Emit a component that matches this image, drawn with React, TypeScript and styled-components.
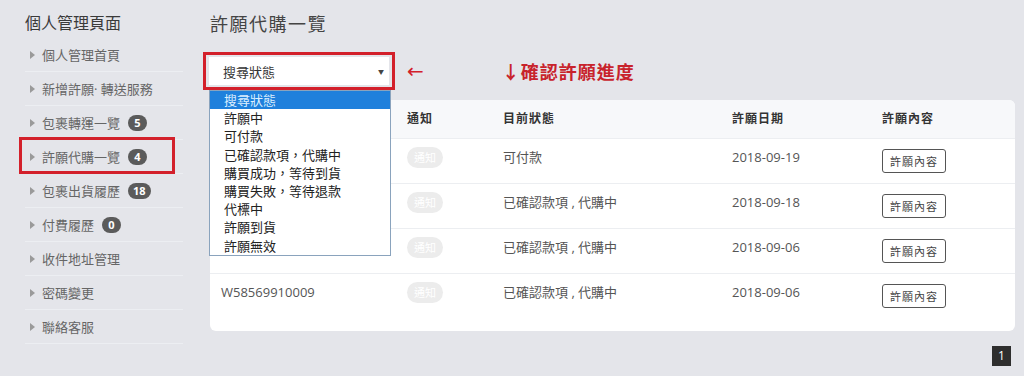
import React from 'react'
import styled, { createGlobalStyle } from 'styled-components'

const GlobalStyle = createGlobalStyle`
  html, body {
    margin: 0;
    padding: 0;
    background: #e4e5ea;
  }
  body {
    font-family: "Open Sans", "Noto Sans CJK TC", sans-serif;
    color: #555;
  }
`

const Page = styled.div`
  display: flex;
  width: 1024px;
  height: 376px;
  overflow: hidden;
`

const Sidebar = styled.div`
  width: 158px;
  padding: 11px 27px 0 25px;
  flex-shrink: 0;
`

const SideTitle = styled.div`
  font-size: 16px;
  line-height: 24px;
  color: #3a3a3a;
  margin-bottom: 3px;
`

const SideItem = styled.div`
  position: relative;
  display: flex;
  align-items: center;
  height: 33px;
  border-bottom: 1px solid #eceef2;
  padding-left: 5px;
  font-size: 13px;
  color: #666;
`

const Caret = styled.span`
  width: 0;
  height: 0;
  border-top: 4px solid transparent;
  border-bottom: 4px solid transparent;
  border-left: 5px solid #9a9a9a;
  margin-right: 7px;
`

const Count = styled.span`
  display: inline-block;
  margin-left: 8px;
  padding: 0 5px;
  min-width: 9px;
  height: 16px;
  line-height: 16px;
  border-radius: 8px;
  background: #5b5b5b;
  color: #fff;
  font-size: 11px;
  font-weight: 700;
  text-align: center;
`

const Highlight = styled.div<{ $top: number; $left: number; $width: number; $height: number }>`
  position: absolute;
  top: ${p => p.$top}px;
  left: ${p => p.$left}px;
  width: ${p => p.$width}px;
  height: ${p => p.$height}px;
  border: 3px solid #d3202b;
  box-sizing: border-box;
  pointer-events: none;
`

const Main = styled.div`
  flex: 1;
  padding: 12px 9px 0 0;
`

const Title = styled.div`
  font-size: 18px;
  line-height: 24px;
  color: #444;
  letter-spacing: 1.5px;
`

const FilterRow = styled.div`
  display: flex;
  align-items: center;
  margin-top: 16px;
  height: 38px;
  margin-left: -7px;
`

const SelectWrap = styled.div`
  position: relative;
  width: 192px;
  height: 38px;
  border: 3px solid #d3202b;
  box-sizing: border-box;
  padding: 2px 3px;
`

const SelectBox = styled.div`
  display: flex;
  align-items: center;
  justify-content: space-between;
  height: 28px;
  background: #fff;
  padding: 0 5px 0 14px;
  font-size: 13px;
  color: #333;
`

const SelectArrow = styled.span`
  font-size: 6px;
  color: #444;
`

const OptionList = styled.div`
  position: absolute;
  top: 35px;
  left: 3px;
  width: 182px;
  background: #fff;
  border: 1px solid #8aa3bd;
  box-sizing: border-box;
  z-index: 2;
`

const Option = styled.div<{ $active?: boolean }>`
  height: 18.2px;
  line-height: 18px;
  padding-left: 14px;
  font-size: 13px;
  color: ${p => (p.$active ? '#dcefff' : '#222')};
  background: ${p => (p.$active ? '#1f80dc' : 'transparent')};
`

const LeftArrow = styled.span`
  margin-left: 12px;
  font-size: 20px;
  color: #d3202b;
  font-family: "DejaVu Sans", sans-serif;
`

const Note = styled.span`
  margin-left: 78px;
  font-size: 18px;
  font-weight: 700;
  color: #c8232c;
  letter-spacing: 1px;
`

const Card = styled.div`
  margin-top: 10px;
  background: #fff;
  border-radius: 6px;
  padding-bottom: 13px;
  overflow: hidden;
`

const Row = styled.div<{ $head?: boolean }>`
  display: grid;
  grid-template-columns: 186px 96px 229px 150px 1fr;
  height: ${p => (p.$head ? 38 : 45)}px;
  align-items: ${p => (p.$head ? 'center' : 'start')};
  background: ${p => (p.$head ? '#f7f8fa' : '#fff')};
  border-top: ${p => (p.$head ? 'none' : '1px solid #eceef1')};
  box-sizing: border-box;
`

const Cell = styled.div<{ $head?: boolean }>`
  padding: ${p => (p.$head ? '0 11px' : '9px 11px 0')};
  font-size: ${p => (p.$head ? 12 : 13)}px;
  font-weight: ${p => (p.$head ? 700 : 400)};
  line-height: 18px;
  color: ${p => (p.$head ? '#333' : '#555')};
  letter-spacing: ${p => (p.$head ? '1px' : '0')};
`

const Notice = styled.span`
  display: inline-block;
  width: 36px;
  height: 21px;
  line-height: 21px;
  border-radius: 11px;
  background: #ececec;
  color: #fff;
  font-size: 11px;
  text-align: center;
  margin-top: -2px;
`

const DetailButton = styled.button`
  height: 24px;
  padding: 0 7px;
  margin-top: 1px;
  background: #fff;
  border: 1px solid #555;
  border-radius: 3px;
  font-family: "Noto Sans CJK TC", sans-serif;
  font-size: 11px;
  color: #444;
  letter-spacing: 1px;
`

const Pager = styled.div`
  display: flex;
  justify-content: flex-end;
  margin-top: 15px;
  padding-right: 4px;
`

const PageNum = styled.span`
  width: 19px;
  height: 20px;
  line-height: 20px;
  text-align: center;
  background: #2e2e2e;
  color: #fff;
  font-size: 12px;
`

const menu: { label: string; count?: number; marked?: boolean }[] = [
  { label: '個人管理首頁' },
  { label: '新增許願· 轉送服務' },
  { label: '包裹轉運一覽', count: 5 },
  { label: '許願代購一覽', count: 4, marked: true },
  { label: '包裹出貨履歷', count: 18 },
  { label: '付費履歷', count: 0 },
  { label: '收件地址管理' },
  { label: '密碼變更' },
  { label: '聯絡客服' },
]

const options = [
  '搜尋狀態',
  '許願中',
  '可付款',
  '已確認款項，代購中',
  '購買成功，等待到貨',
  '購買失敗，等待退款',
  '代標中',
  '許願到貨',
  '許願無效',
]

// ids of the first rows sit under the open select list
const rows = [
  { id: '', status: '可付款', date: '2018-09-19' },
  { id: '', status: '已確認款項 , 代購中', date: '2018-09-18' },
  { id: '', status: '已確認款項 , 代購中', date: '2018-09-06' },
  { id: 'W58569910009', status: '已確認款項 , 代購中', date: '2018-09-06' },
]

const App = () => {
  return (
    <Page>
      <GlobalStyle />
      <Sidebar>
        <SideTitle>個人管理頁面</SideTitle>
        {menu.map(m => (
          <SideItem key={m.label}>
            <Caret />
            {m.label}
            {m.count !== undefined && <Count>{m.count}</Count>}
            {m.marked && <Highlight $top={-3} $left={-6} $width={156} $height={37} />}
          </SideItem>
        ))}
      </Sidebar>
      <Main>
        <Title>許願代購一覽</Title>
        <FilterRow>
          <SelectWrap>
            <SelectBox>
              搜尋狀態
              <SelectArrow>▼</SelectArrow>
            </SelectBox>
            <OptionList>
              {options.map((o, i) => (
                <Option key={o} $active={i === 0}>
                  {o}
                </Option>
              ))}
            </OptionList>
          </SelectWrap>
          <LeftArrow>←</LeftArrow>
          <Note>↓確認許願進度</Note>
        </FilterRow>
        <Card>
          <Row $head>
            <Cell $head />
            <Cell $head>通知</Cell>
            <Cell $head>目前狀態</Cell>
            <Cell $head>許願日期</Cell>
            <Cell $head>許願內容</Cell>
          </Row>
          {rows.map((r, i) => (
            <Row key={i}>
              <Cell>{r.id}</Cell>
              <Cell>
                <Notice>通知</Notice>
              </Cell>
              <Cell>{r.status}</Cell>
              <Cell>{r.date}</Cell>
              <Cell>
                <DetailButton>許願內容</DetailButton>
              </Cell>
            </Row>
          ))}
        </Card>
        <Pager>
          <PageNum>1</PageNum>
        </Pager>
      </Main>
    </Page>
  )
}

export default App
